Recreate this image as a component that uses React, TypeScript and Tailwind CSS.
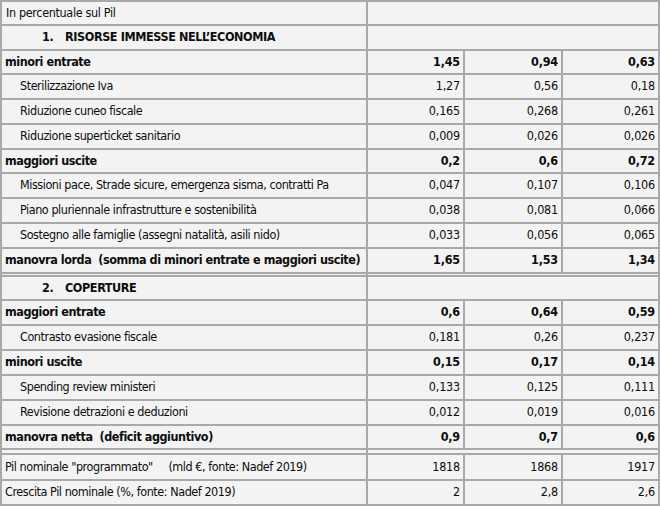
import React from "react";

type Row =
  | { kind: "header"; label: string }
  | { kind: "section"; num: string; label: string }
  | { kind: "gap" }
  | { kind: "data"; label: string; values: string[]; bold?: boolean; indent?: boolean };

const rows: Row[] = [
  { kind: "header", label: "In percentuale sul Pil" },
  { kind: "section", num: "1.", label: "RISORSE IMMESSE NELL\u2019ECONOMIA" },
  { kind: "data", label: "minori entrate", values: ["1,45", "0,94", "0,63"], bold: true },
  { kind: "data", label: "Sterilizzazione Iva", values: ["1,27", "0,56", "0,18"], indent: true },
  { kind: "data", label: "Riduzione cuneo fiscale", values: ["0,165", "0,268", "0,261"], indent: true },
  { kind: "data", label: "Riduzione superticket sanitario", values: ["0,009", "0,026", "0,026"], indent: true },
  { kind: "data", label: "maggiori uscite", values: ["0,2", "0,6", "0,72"], bold: true },
  { kind: "data", label: "Missioni pace, Strade sicure, emergenza sisma, contratti Pa", values: ["0,047", "0,107", "0,106"], indent: true },
  { kind: "data", label: "Piano pluriennale infrastrutture e sostenibilit\u00e0", values: ["0,038", "0,081", "0,066"], indent: true },
  { kind: "data", label: "Sostegno alle famiglie (assegni natalit\u00e0, asili nido)", values: ["0,033", "0,056", "0,065"], indent: true },
  { kind: "data", label: "manovra lorda  (somma di minori entrate e maggiori uscite)", values: ["1,65", "1,53", "1,34"], bold: true },
  { kind: "gap" },
  { kind: "section", num: "2.", label: "COPERTURE" },
  { kind: "data", label: "maggiori entrate", values: ["0,6", "0,64", "0,59"], bold: true },
  { kind: "data", label: "Contrasto evasione fiscale", values: ["0,181", "0,26", "0,237"], indent: true },
  { kind: "data", label: "minori uscite", values: ["0,15", "0,17", "0,14"], bold: true },
  { kind: "data", label: "Spending review ministeri", values: ["0,133", "0,125", "0,111"], indent: true },
  { kind: "data", label: "Revisione detrazioni e deduzioni", values: ["0,012", "0,019", "0,016"], indent: true },
  { kind: "data", label: "manovra netta  (deficit aggiuntivo)", values: ["0,9", "0,7", "0,6"], bold: true },
  { kind: "gap" },
  { kind: "data", label: "Pil nominale \"programmato\"     (mld \u20ac, fonte: Nadef 2019)", values: ["1818", "1868", "1917"] },
  { kind: "data", label: "Crescita Pil nominale (%, fonte: Nadef 2019)", values: ["2", "2,8", "2,6"] },
];

const cell = "bg-[#f3f3f3] flex items-center overflow-hidden whitespace-pre";

export default function App() {
  return (
    <div
      className="w-[660px] h-[506px] bg-[#a9a9a9] p-[2px] grid gap-[2px] grid-cols-[364px_95px_96px_95px] grid-rows-[22px_23px_22px_23px_23px_23px_22px_23px_23px_23px_23px_1px_22px_23px_23px_23px_23px_23px_22px_3px_24px_23px] text-[12.5px] leading-none text-[#0d0d0d] font-stretch-condensed"
      style={{ fontFamily: '"DejaVu Sans Condensed", "DejaVu Sans", sans-serif' }}
    >
      {rows.map((r, i) => {
        if (r.kind === "header") {
          return (
            <React.Fragment key={i}>
              <div className={`${cell} pl-[4px] tracking-[-0.35px]`}>{r.label}</div>
              <div className={`${cell} col-span-3`} />
            </React.Fragment>
          );
        }
        if (r.kind === "section") {
          return (
            <React.Fragment key={i}>
              <div className={`${cell} font-bold tracking-[-0.4px]`}>
                <span className="w-[63px] pl-[40px]">{r.num}</span>
                <span>{r.label}</span>
              </div>
              <div className={`${cell} col-span-3`} />
            </React.Fragment>
          );
        }
        if (r.kind === "gap") {
          return (
            <React.Fragment key={i}>
              <div className="bg-[#f3f3f3]" />
              <div className="bg-[#f3f3f3] col-span-3" />
            </React.Fragment>
          );
        }
        return (
          <React.Fragment key={i}>
            <div
              className={`${cell} ${r.indent ? "pl-[18px]" : "pl-[3px]"} ${
                r.bold ? "font-bold tracking-[-0.45px]" : "tracking-[-0.45px]"
              }`}
            >
              {r.label}
            </div>
            {r.values.map((v, j) => (
              <div
                key={j}
                className={`${cell} justify-end pr-[3px] tracking-[-0.2px] ${r.bold ? "font-bold" : ""}`}
              >
                {v}
              </div>
            ))}
          </React.Fragment>
        );
      })}
    </div>
  );
}
